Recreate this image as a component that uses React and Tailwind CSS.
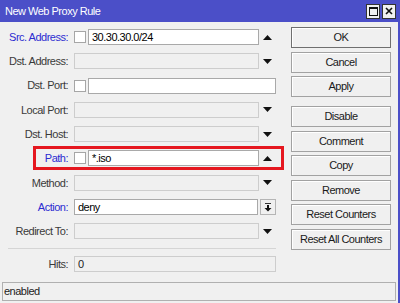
const font = { fontFamily: '"Liberation Sans", Arial, sans-serif' };

function Arrow({ up }) {
  return (
    <svg width="9" height="5" viewBox="0 0 9 5">
      <polygon points={up ? "0,5 9,5 4.5,0" : "0,0 9,0 4.5,5"} fill="#111" />
    </svg>
  );
}

function Row({ label, blue, check, kind, value, hl }) {
  return (
    <div className="relative flex h-4 items-center">
      {hl && (
        <div className="absolute -top-[4px] -bottom-[4px] left-[33px] -right-[8px] border-[3px] border-[#e5171f]" />
      )}
      <div className={`w-[68px] text-right ${blue ? "text-[#2c2cd0]" : "text-[#3a3a3a]"}`}>{label}</div>
      <div className="ml-[6px] flex h-4 flex-1 items-center">
        {check && <div className="mr-[2px] h-[12px] w-[12px] border border-[#a6a6a6] bg-white" />}
        {kind === "off" ? (
          <div className="h-4 flex-1 border border-[#cdcdcd] bg-[#f0f0f0]" />
        ) : (
          <div className="flex h-4 flex-1 items-center border border-[#a9a9a9] bg-white pl-[3px] text-black">
            {value}
          </div>
        )}
        {kind === "action" && (
          <div className="ml-[2px] flex h-4 w-4 flex-col items-center justify-center border border-[#b5b5b5] bg-[#f0f0f0]">
            <svg width="8" height="9" viewBox="0 0 8 9">
              <rect x="1" y="0" width="6" height="1" fill="#333" />
              <rect x="3" y="2" width="2" height="3" fill="#111" />
              <polygon points="0.5,5 7.5,5 4,8.5" fill="#111" />
            </svg>
          </div>
        )}
        {(kind === "up" || kind === "off") && (
          <div className="flex w-[17px] justify-center">
            <Arrow up={kind === "up"} />
          </div>
        )}
      </div>
    </div>
  );
}

function Btn({ children, first, className = "" }) {
  return (
    <div
      className={`flex h-[21px] items-center justify-center border bg-[#f0f0f0] text-[#1a1a1a] shadow-[inset_1px_1px_0_#fff] ${
        first ? "border-[#6f6f6f]" : "border-[#a2a2a2]"
      } ${className}`}
    >
      {children}
    </div>
  );
}

export default function App() {
  return (
    <div
      style={font}
      className="flex h-[303px] w-[400px] flex-col border-r-2 border-[#4b4fc8] bg-[#f0f0f0] text-[11px] tracking-[-0.5px]"
    >
      <div className="flex h-[22px] shrink-0 items-center bg-[#4b4fc8] pl-[5px] pr-[2px] text-white">
        <span className="flex-1">New Web Proxy Rule</span>
        <div className="flex h-[15px] w-[14px] items-center justify-center border border-[#333] bg-[#f0f0f0]">
          <div className="h-[9px] w-[9px] border border-t-2 border-[#111]" />
        </div>
        <div className="ml-[2px] flex h-[15px] w-[14px] items-center justify-center border border-[#333] bg-[#f0f0f0]">
          <svg width="8" height="8" viewBox="0 0 8 8">
            <path d="M1 1 L7 7 M7 1 L1 7" stroke="#111" strokeWidth="1.6" />
          </svg>
        </div>
      </div>

      <div className="flex flex-1 pt-[5px]">
        <div className="flex w-[276px] flex-col pt-[2px]">
          <div className="flex flex-col gap-[8.3px]">
            <Row label="Src. Address:" blue check kind="up" value="30.30.30.0/24" />
            <Row label="Dst. Address:" kind="off" />
            <Row label="Dst. Port:" check kind="text" />
            <Row label="Local Port:" kind="off" />
            <Row label="Dst. Host:" kind="off" />
            <Row label="Path:" blue check kind="up" value="*.iso" hl />
            <Row label="Method:" kind="off" />
            <Row label="Action:" blue kind="action" value="deny" />
            <Row label="Redirect To:" kind="off" />
          </div>
          <div className="ml-[8px] mt-[9px] h-px bg-[#d5d5d5]" />
          <div className="mt-[7px] flex h-4 items-center">
            <div className="w-[68px] text-right text-[#3a3a3a]">Hits:</div>
            <div className="ml-[6px] flex h-4 flex-1 items-center border border-[#cdcdcd] bg-[#f0f0f0] pl-[3px] text-[#222]">
              0
            </div>
          </div>
        </div>

        <div className="ml-[15px] flex w-[100px] flex-col gap-[3.5px]">
          <Btn first>OK</Btn>
          <Btn>Cancel</Btn>
          <Btn>Apply</Btn>
          <Btn className="mt-[5.5px]">Disable</Btn>
          <Btn>Comment</Btn>
          <Btn>Copy</Btn>
          <Btn>Remove</Btn>
          <Btn>Reset Counters</Btn>
          <Btn>Reset All Counters</Btn>
        </div>
      </div>

      <div className="mx-[2px] mb-[2px] flex h-[19px] shrink-0 items-center border border-[#b0b0b0] pl-[1px] text-[#222]">
        enabled
      </div>
    </div>
  );
}
